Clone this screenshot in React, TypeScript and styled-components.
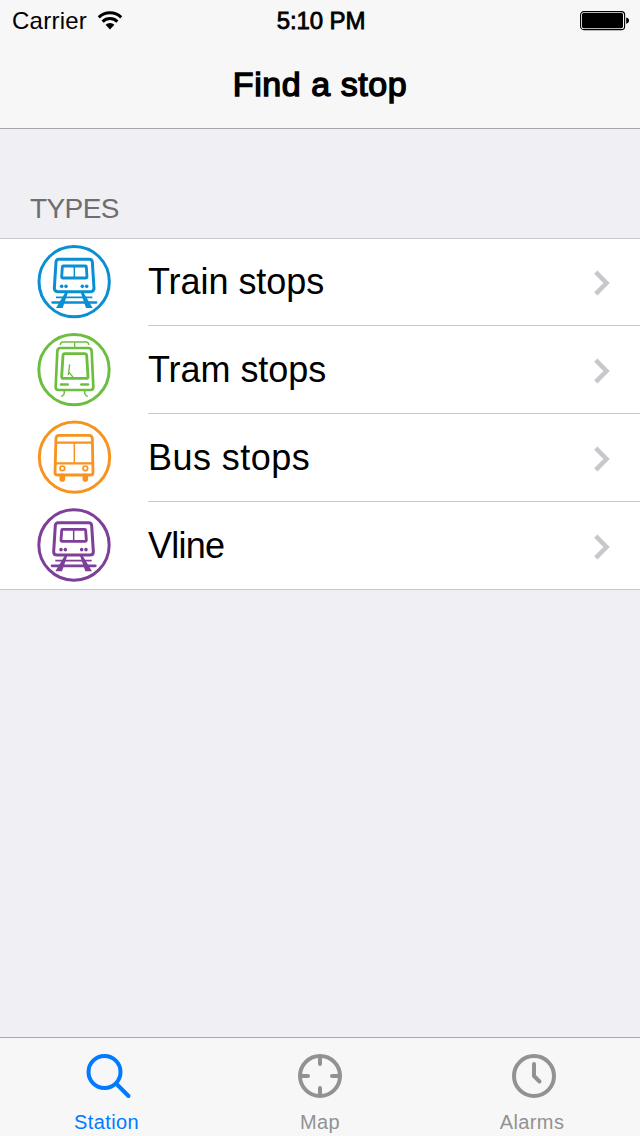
import React from "react";
import styled, { createGlobalStyle } from "styled-components";

const GlobalStyle = createGlobalStyle`
  * { box-sizing: border-box; }
  body {
    margin: 0;
    background: #efeff4;
    font-family: "Liberation Sans", Arial, sans-serif;
    color: #000;
  }
`;

const Screen = styled.div`
  display: flex;
  flex-direction: column;
  width: 640px;
  height: 1136px;
  overflow: hidden;
  background: #efeff4;
`;

const Header = styled.header`
  height: 129px;
  background: #f7f7f7;
  border-bottom: 1px solid #a7a7aa;
`;

const StatusBar = styled.div`
  display: grid;
  grid-template-columns: 1fr auto 1fr;
  align-items: center;
  height: 40px;
  padding: 2px 10px 0 12px;
  font-size: 24px;
  line-height: 28px;
`;

const Carrier = styled.div`
  display: flex;
  align-items: center;
  gap: 10px;
  letter-spacing: 0.25px;
`;

const Clock = styled.div`
  letter-spacing: -0.1px;
  -webkit-text-stroke: 0.8px #000;
`;

const BatterySlot = styled.div`
  display: flex;
  justify-content: flex-end;
`;

const Title = styled.h1`
  margin: 0;
  height: 88px;
  font-size: 34px;
  line-height: 88px;
  font-weight: 400;
  letter-spacing: 0.55px;
  -webkit-text-stroke: 1.4px #000;
  text-align: center;
`;

const Content = styled.main`
  flex: 1;
`;

const SectionTitle = styled.h2`
  margin: 0;
  height: 109px;
  padding: 64px 30px 0;
  font-size: 28px;
  line-height: 32px;
  font-weight: 400;
  letter-spacing: -0.6px;
  color: #6d6d72;
`;

const List = styled.ul`
  margin: 0;
  padding: 0;
  list-style: none;
  background: #fff;
  box-shadow: inset 0 1px #c8c7cc, inset 0 -1px #c8c7cc;
`;

const Row = styled.li`
  display: flex;
  align-items: center;
  height: 88px;
  padding-left: 36px;
`;

const RowBody = styled.div<{ $divided: boolean }>`
  flex: 1;
  display: flex;
  align-items: center;
  justify-content: space-between;
  height: 88px;
  margin-left: 36px;
  padding: 2px 29px 0 0;
  border-bottom: 1px solid ${(p) => (p.$divided ? "#c8c7cc" : "transparent")};
`;

const RowLabel = styled.span<{ $tracking: number }>`
  padding-bottom: 1px;
  font-size: 36px;
  line-height: 42px;
  letter-spacing: ${(p) => p.$tracking}px;
`;

const TabBar = styled.nav`
  display: grid;
  grid-template-columns: 213px 214px 1fr;
  height: 99px;
  padding-right: 3px;
  background: #f7f7f7;
  border-top: 1px solid #a7a7aa;
`;

const Tab = styled.div<{ $active?: boolean }>`
  display: flex;
  flex-direction: column;
  align-items: center;
  padding-top: 14px;
  color: ${(p) => (p.$active ? "#007aff" : "#929292")};
`;

const TabLabel = styled.span`
  margin-top: 10px;
  font-size: 20px;
  line-height: 24px;
  letter-spacing: 0.4px;
`;

const WifiIcon = () => (
  <svg width="26" height="20" viewBox="0 0 26 20" fill="none" stroke="#000">
    <path d="M1.8 6.4A16 16 0 0 1 24.2 6.4" strokeWidth="3" />
    <path d="M5.6 10.6A10.6 10.6 0 0 1 20.4 10.6" strokeWidth="3" />
    <path d="M8.6 13.8A6.3 6.3 0 0 1 17.4 13.8L13 18.4Z" fill="#000" stroke="none" />
  </svg>
);

const BatteryIcon = () => (
  <svg width="50" height="20" viewBox="0 0 50 20">
    <rect x="0.6" y="0.6" width="44" height="18" rx="3.2" fill="none" stroke="#000" strokeWidth="1.1" />
    <rect x="2" y="2" width="41" height="15.2" rx="1.6" fill="#000" />
    <path d="M46.2 6.4Q49 7 49 9.6T46.2 12.8Z" fill="#000" />
  </svg>
);

const Chevron = () => (
  <svg width="18" height="28" viewBox="0 0 18 28" fill="none" stroke="#c7c7cc" strokeWidth="4.6">
    <path d="M2.8 3.2L13.5 14L2.8 24.8" />
  </svg>
);

type BadgeProps = { color: string; cx: number; cy: number; children: React.ReactNode };

const Badge = ({ color, cx, cy, children }: BadgeProps) => (
  <svg width="76" height="76" viewBox="48 18 228 228" fill="none" stroke={color}>
    <circle cx={cx} cy={cy} r="105.5" strokeWidth="9" />
    {children}
  </svg>
);

const TrainArt = ({ color, dx = 0, dy = 0 }: { color: string; dx?: number; dy?: number }) => (
  <g transform={`translate(${dx} ${dy})`}>
    <path d="M117 64H208Q216 64 217 72L222 151Q222 161 212 161H113Q103 161 103 151L108 72Q109 64 117 64Z" strokeWidth="9" />
    <path d="M130 84H196Q199 84 199 87L201 117Q201 120 198 120H128Q125 120 125 117L127 87Q127 84 130 84Z" strokeWidth="8.5" />
    <path d="M163 83V120" strokeWidth="4.5" />
    <g fill={color} stroke="none">
      <circle cx="125" cy="145" r="5.4" />
      <circle cx="138" cy="145" r="5.4" />
      <circle cx="187" cy="145" r="5.4" />
      <circle cx="200" cy="145" r="5.4" />
      <path d="M136 163H144L128 210H108ZM182 163H190L218 210H198Z" />
    </g>
    <path d="M108 178H217" strokeWidth="5" />
    <path d="M98 193.5H228" strokeWidth="8" strokeLinecap="round" />
  </g>
);

const TrainIcon = () => (
  <Badge color="#0a8fd3" cx={162.5} cy={131}>
    <TrainArt color="#0a8fd3" />
  </Badge>
);

const VlineIcon = () => (
  <Badge color="#7d3f98" cx={162} cy={129}>
    <TrainArt color="#7d3f98" dx={-2} dy={-2} />
  </Badge>
);

const TramIcon = () => (
  <Badge color="#6cbe3f" cx={162} cy={131}>
    <path d="M121 57Q121 48 129 48H198Q206 48 206 57M164 48V64" strokeWidth="4" />
    <path d="M121 66H205Q214 66 215 75L220 183Q220 192 211 192H116Q107 192 107 183L112 75Q113 66 121 66Z" strokeWidth="8" />
    <path d="M134 83H194Q199 83 200 88L204 152Q204 157 199 157H130Q125 157 125 152L129 88Q130 83 134 83Z" strokeWidth="8.5" />
    <path d="M149 115L145 147M145 136L160 155" strokeWidth="4" />
    <path d="M123 175.5H143M184 175.5H204" strokeWidth="8" strokeLinecap="round" />
    <path d="M133 194V201Q133 206 124 212M194 194V201Q194 206 203 212" strokeWidth="4.5" />
  </Badge>
);

const BusIcon = () => (
  <Badge color="#f7931e" cx={163.5} cy={129.5}>
    <path d="M117 64H207Q216 64 217 73L219 176Q219 183 211 183H113Q105 183 105 176L108 73Q109 64 117 64Z" strokeWidth="8.5" />
    <path d="M108 86H216M107 148H219" strokeWidth="7" />
    <path d="M163 86V148" strokeWidth="4.5" />
    <circle cx="127" cy="163" r="7" strokeWidth="5" />
    <circle cx="196" cy="163" r="7" strokeWidth="5" />
    <path d="M127 187V195M196 187V195" strokeWidth="17" strokeLinecap="round" />
  </Badge>
);

const SearchIcon = () => (
  <svg width="50" height="48" viewBox="0 0 50 48" fill="none" stroke="currentColor" strokeWidth="4">
    <circle cx="22.5" cy="20" r="16" />
    <path d="M34 31.5L46.5 44" strokeLinecap="round" />
  </svg>
);

const TargetIcon = () => (
  <svg width="48" height="48" viewBox="0 0 48 48" fill="none" stroke="currentColor" strokeWidth="4">
    <circle cx="24" cy="24" r="20" />
    <path d="M24 5V12M24 36V43M5 24H12M36 24H43" strokeLinecap="round" />
  </svg>
);

const ClockIcon = () => (
  <svg width="48" height="48" viewBox="0 0 48 48" fill="none" stroke="currentColor" strokeWidth="4">
    <circle cx="26" cy="24" r="20" />
    <path d="M26 12V24L31.5 29.5" strokeLinecap="round" strokeLinejoin="round" />
  </svg>
);

const stops = [
  { label: "Train stops", Icon: TrainIcon, tracking: -0.05 },
  { label: "Tram stops", Icon: TramIcon, tracking: -0.05 },
  { label: "Bus stops", Icon: BusIcon, tracking: 0.45 },
  { label: "Vline", Icon: VlineIcon, tracking: -0.75 },
];

const tabs = [
  { label: "Station", Icon: SearchIcon, active: true },
  { label: "Map", Icon: TargetIcon, active: false },
  { label: "Alarms", Icon: ClockIcon, active: false },
];

export default function App() {
  return (
    <Screen>
      <GlobalStyle />
      <Header>
        <StatusBar>
          <Carrier>
            Carrier
            <WifiIcon />
          </Carrier>
          <Clock>5:10 PM</Clock>
          <BatterySlot>
            <BatteryIcon />
          </BatterySlot>
        </StatusBar>
        <Title>Find a stop</Title>
      </Header>
      <Content>
        <SectionTitle>TYPES</SectionTitle>
        <List>
          {stops.map(({ label, Icon, tracking }, i) => (
            <Row key={label}>
              <Icon />
              <RowBody $divided={i < stops.length - 1}>
                <RowLabel $tracking={tracking}>{label}</RowLabel>
                <Chevron />
              </RowBody>
            </Row>
          ))}
        </List>
      </Content>
      <TabBar>
        {tabs.map(({ label, Icon, active }) => (
          <Tab key={label} $active={active}>
            <Icon />
            <TabLabel>{label}</TabLabel>
          </Tab>
        ))}
      </TabBar>
    </Screen>
  );
}
